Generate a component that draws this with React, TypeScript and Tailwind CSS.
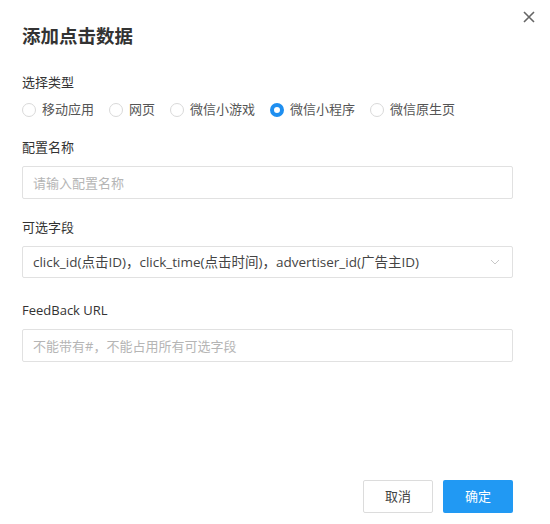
import { useState } from 'react';

const types = ['移动应用', '网页', '微信小游戏', '微信小程序', '微信原生页'];

const Radio = ({ label, checked, onClick }: { label: string; checked: boolean; onClick: () => void }) => (
  <label onClick={onClick} className="flex items-center gap-[6px] mr-[15px] cursor-pointer">
    <span
      className={
        checked
          ? 'w-[14px] h-[14px] rounded-full border-[4px] border-[#1f8ff0] bg-white'
          : 'w-[14px] h-[14px] rounded-full border border-[#d9d9d9] bg-white'
      }
    />
    <span className="text-[13px] text-[#555]">{label}</span>
  </label>
);

const App = () => {
  const [type, setType] = useState(3);

  return (
    <div
      className="relative w-[550px] h-[524px] bg-white pt-[24px] pl-[22px] text-[#333]"
      style={{ fontFamily: '"Open Sans", "Noto Sans CJK SC", sans-serif' }}
    >
      {/* Close */}
      <button className="absolute top-[10px] right-[15px] w-[13px] h-[13px] flex items-center justify-center">
        <svg width="12" height="12" viewBox="0 0 12 12">
          <path d="M1 1L11 11M11 1L1 11" stroke="#666" strokeWidth="1.6" />
        </svg>
      </button>

      <div className="w-[491px] flex flex-col">
        <h2 className="h-[24px] leading-[24px] text-[18.5px] font-bold text-[#333]">添加点击数据</h2>

        <div className="mt-[24px] h-[20px] leading-[20px] text-[13px]">选择类型</div>
        <div className="mt-[8px] h-[20px] flex items-center">
          {types.map((t, i) => (
            <Radio key={t} label={t} checked={type === i} onClick={() => setType(i)} />
          ))}
        </div>

        <div className="mt-[17px] h-[20px] leading-[20px] text-[13px]">配置名称</div>
        <input
          className="mt-[9px] h-[33px] border border-[#e1e1e1] rounded-[2px] px-[10px] text-[13px] outline-none placeholder:text-[#b5b5b5]"
          placeholder="请输入配置名称"
        />

        <div className="mt-[18px] h-[20px] leading-[20px] text-[13px]">可选字段</div>
        <div className="mt-[9px] h-[32px] border border-[#e1e1e1] rounded-[2px] pl-[10px] pr-[12px] flex items-center justify-between">
          <span className="text-[13.5px] text-[#444] whitespace-nowrap">
            click_id(点击ID)，click_time(点击时间)，advertiser_id(广告主ID)
          </span>
          <svg width="10" height="6" viewBox="0 0 10 6">
            <path d="M1 1L5 5L9 1" stroke="#c8c8c8" strokeWidth="1" fill="none" />
          </svg>
        </div>

        <div className="mt-[22px] h-[20px] leading-[20px] text-[13px]">FeedBack URL</div>
        <input
          className="mt-[9px] h-[33px] border border-[#e1e1e1] rounded-[2px] px-[10px] text-[13px] outline-none placeholder:text-[#b5b5b5]"
          placeholder="不能带有#，不能占用所有可选字段"
        />

        <div className="mt-[118px] flex justify-end gap-[10px]">
          <button className="w-[70px] h-[33px] border border-[#dcdcdc] rounded-[2px] bg-white text-[13px] text-[#444]">
            取消
          </button>
          <button className="w-[70px] h-[33px] rounded-[2px] bg-[#2199f3] text-[13px] text-white">确定</button>
        </div>
      </div>
    </div>
  );
};

export default App;
